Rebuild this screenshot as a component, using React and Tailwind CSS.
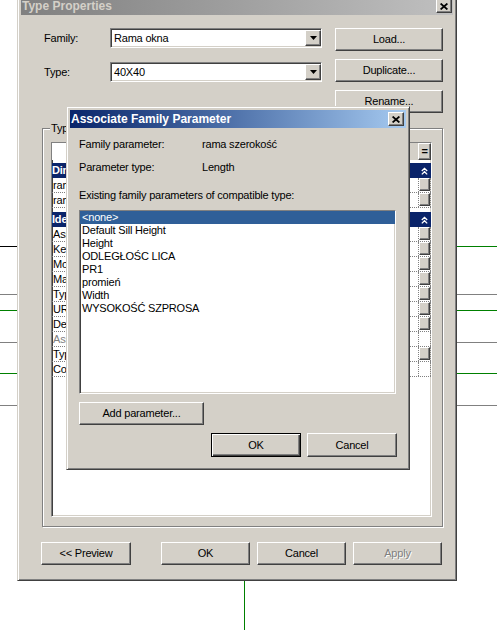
import React from "react";

// classic win2k bevels
const raised =
  "bg-[#d4d0c8] border border-t-white border-l-white border-r-[#404040] border-b-[#404040] shadow-[inset_-1px_-1px_0_#808080]";
const sunken =
  "border border-t-[#808080] border-l-[#808080] border-r-white border-b-white shadow-[inset_1px_1px_0_#404040,inset_-1px_-1px_0_#d4d0c8]";
const frame =
  "bg-[#d4d0c8] border border-t-[#d4d0c8] border-l-[#d4d0c8] border-r-[#404040] border-b-[#404040] shadow-[inset_1px_1px_0_#fff,inset_-1px_-1px_0_#808080] p-[3px]";
const etched =
  "border border-[#808080] shadow-[inset_1px_1px_0_#fff,1px_1px_0_#fff]";

const CloseButton = () => (
  <div className={`${raised} w-[16px] h-[14px] flex items-center justify-center`}>
    <svg width="8" height="7" viewBox="0 0 8 7">
      <path d="M0.6 0.5L7.4 6.5M7.4 0.5L0.6 6.5" stroke="black" strokeWidth="1.7" />
    </svg>
  </div>
);

const Button = ({ children, className = "", disabled }) => (
  <div
    className={`${raised} h-[23px] flex items-center justify-center ${className} ${
      disabled ? "text-[#808080] [text-shadow:1px_1px_0_#fff]" : ""
    }`}
  >
    {children}
  </div>
);

const Combo = ({ value }) => (
  <div className={`${sunken} bg-white w-[212px] h-[20px] flex items-center`}>
    <span className="pl-[3px]">{value}</span>
    <div className={`${raised} ml-auto w-[16px] h-[16px] flex items-center justify-center`}>
      <svg width="7" height="4" viewBox="0 0 7 4">
        <polygon points="0,0 7,0 3.5,4" fill="black" />
      </svg>
    </div>
  </div>
);

const Chevrons = () => (
  <svg width="7" height="8" viewBox="0 0 7 8">
    <path d="M0.8 4L3.5 1.3L6.2 4M0.8 7.4L3.5 4.7L6.2 7.4" stroke="white" strokeWidth="1.3" fill="none" />
  </svg>
);

const groups = [
  {
    name: "Dimensions",
    rows: [
      { name: "rama szerokość", link: true },
      { name: "rama wysokość", link: true },
    ],
  },
  {
    name: "Identity Data",
    rows: [
      { name: "Assembly Code", link: true },
      { name: "Keynote", link: true },
      { name: "Model", link: true },
      { name: "Manufacturer", link: true },
      { name: "Type Comments", link: true },
      { name: "URL", link: true },
      { name: "Description", link: true },
      { name: "Assembly Description", link: false, readOnly: true },
      { name: "Type Mark", link: true },
      { name: "Cost", link: false },
    ],
  },
];

const ParamTable = () => (
  <div className={`${sunken} bg-white ml-[8px] mt-[13px] w-[381px] h-[375px] flex flex-col`}>
    <div className="h-[17px] flex">
      <div className="w-[187px] bg-white border-r border-[#808080]" />
      <div className="flex-1 bg-[#d4d0c8]" />
      <div className={`${raised} w-[13px] border-l-black flex items-center justify-center font-bold`}>=</div>
    </div>
    {groups.map((g, gi) => (
      <div key={g.name} className={gi === 0 ? "mt-[3px]" : "mt-[4px]"}>
        <div className="h-[15px] bg-[#0a246a] text-white font-bold flex items-center">
          <span className="flex-1">{g.name}</span>
          <div className="w-[13px] flex justify-center">
            <Chevrons />
          </div>
        </div>
        {g.rows.map((r) => (
          <div key={r.name} className="h-[15px] flex border-b border-dotted border-[#808080]">
            <div className={`w-[187px] pl-[1px] flex items-center ${r.readOnly ? "text-[#808080]" : ""}`}>
              {r.name}
            </div>
            <div className="flex-1 border-l border-dotted border-[#808080]" />
            <div className="w-[13px] border-l border-r border-dotted border-[#808080] flex items-start justify-center">
              {r.link && <div className={`${raised} w-[11px] h-[13px]`} />}
            </div>
          </div>
        ))}
      </div>
    ))}
  </div>
);

const TypeProperties = () => (
  <div className={`${frame} absolute left-[17px] top-[-7px] w-[440px] h-[588px] flex flex-col`}>
    <div className="h-[18px] shrink-0 flex items-center bg-linear-to-r from-[#808080] to-[#c0c0c0]">
      <span className="pl-[1px] font-bold text-[12px] tracking-normal text-[#d4d0c8]">Type Properties</span>
      <div className="ml-auto mr-[1px]">
        <CloseButton />
      </div>
    </div>

    <div className="flex pl-[23px] pt-[13px]">
      <div className="flex flex-col gap-[14px]">
        <div className="flex items-center h-[20px]">
          <span className="w-[66px]">Family:</span>
          <Combo value="Rama okna" />
        </div>
        <div className="flex items-center h-[20px]">
          <span className="w-[66px]">Type:</span>
          <Combo value="40X40" />
        </div>
      </div>
      <div className="ml-[13px] flex flex-col gap-[8px]">
        <Button className="w-[108px]">Load...</Button>
        <Button className="w-[108px]">Duplicate...</Button>
        <Button className="w-[108px]">Rename...</Button>
      </div>
    </div>

    <div className={`${etched} relative mt-[15px] ml-[21px] w-[401px] h-[399px]`}>
      <span className="absolute left-[7px] top-[-7px] bg-[#d4d0c8] px-[1px]">Type Parameters</span>
      <ParamTable />
    </div>

    <div className="flex mt-[15px] pl-[20px]">
      <Button className="w-[90px]">&lt;&lt; Preview</Button>
      <Button className="w-[89px] ml-[30px]">OK</Button>
      <Button className="w-[89px] ml-[7px]">Cancel</Button>
      <Button className="w-[89px] ml-[7px]" disabled>
        Apply
      </Button>
    </div>
  </div>
);

const existing = [
  "<none>",
  "Default Sill Height",
  "Height",
  "ODLEGŁOŚC LICA",
  "PR1",
  "promień",
  "Width",
  "WYSOKOŚĆ SZPROSA",
];

const AssociateDialog = () => (
  <div className={`${frame} absolute left-[66px] top-[106px] w-[344px] h-[364px] flex flex-col`}>
    <div className="h-[18px] shrink-0 flex items-center bg-linear-to-r from-[#0a246a] to-[#a6caf0]">
      <span className="pl-[1px] font-bold text-[12px] tracking-normal text-white">Associate Family Parameter</span>
      <div className="ml-auto mr-[2px]">
        <CloseButton />
      </div>
    </div>

    <div className="pl-[9px] pt-[10px] flex flex-col">
      <div className="flex">
        <span className="w-[123px]">Family parameter:</span>
        <span>rama szerokość</span>
      </div>
      <div className="flex mt-[10px]">
        <span className="w-[123px]">Parameter type:</span>
        <span>Length</span>
      </div>
      <div className="mt-[15px]">Existing family parameters of compatible type:</div>

      <div className={`${sunken} bg-white mt-[8px] w-[317px] h-[184px] flex flex-col`}>
        {existing.map((p, i) => (
          <div
            key={p}
            className={`h-[13px] px-[2px] flex items-center ${i === 0 ? "bg-[#2f5f98] text-white" : ""}`}
          >
            {p}
          </div>
        ))}
      </div>

      <Button className="w-[125px] mt-[8px]">Add parameter...</Button>
    </div>

    <div className="flex justify-end items-start gap-[6px] pr-[9px] mt-[8px]">
      <div className="w-[90px] h-[24px] bg-[#d4d0c8] border border-black shadow-[inset_1px_1px_0_#fff,inset_-1px_-1px_0_#404040,inset_-2px_-2px_0_#808080] flex items-center justify-center">
        OK
      </div>
      <Button className="w-[90px] h-[24px]">Cancel</Button>
    </div>
  </div>
);

const Backdrop = () => (
  <svg className="absolute inset-0" width="497" height="641">
    <g strokeWidth="1" shapeRendering="crispEdges">
      <line x1="0" y1="246.5" x2="17" y2="246.5" stroke="#000" />
      <line x1="0" y1="294.5" x2="17" y2="294.5" stroke="#808080" />
      <line x1="0" y1="310.5" x2="17" y2="310.5" stroke="#008000" />
      <line x1="0" y1="342.5" x2="17" y2="342.5" stroke="#808080" />
      <line x1="0" y1="373.5" x2="17" y2="373.5" stroke="#008000" />
      <line x1="0" y1="405.5" x2="17" y2="405.5" stroke="#808080" />
      <line x1="457" y1="246.5" x2="497" y2="246.5" stroke="#008000" />
      <line x1="457" y1="294.5" x2="497" y2="294.5" stroke="#808080" />
      <line x1="457" y1="310.5" x2="497" y2="310.5" stroke="#008000" />
      <line x1="457" y1="342.5" x2="497" y2="342.5" stroke="#808080" />
      <line x1="457" y1="373.5" x2="497" y2="373.5" stroke="#008000" />
      <line x1="457" y1="405.5" x2="497" y2="405.5" stroke="#808080" />
      <line x1="244.5" y1="581" x2="244.5" y2="630" stroke="#008000" />
    </g>
  </svg>
);

export default function App() {
  return (
    <div className="relative w-[497px] h-[641px] overflow-hidden bg-white font-['Liberation_Sans',Arial,sans-serif] text-[11px] leading-[13px] tracking-[-0.2px] text-black">
      <Backdrop />
      <TypeProperties />
      <AssociateDialog />
    </div>
  );
}
